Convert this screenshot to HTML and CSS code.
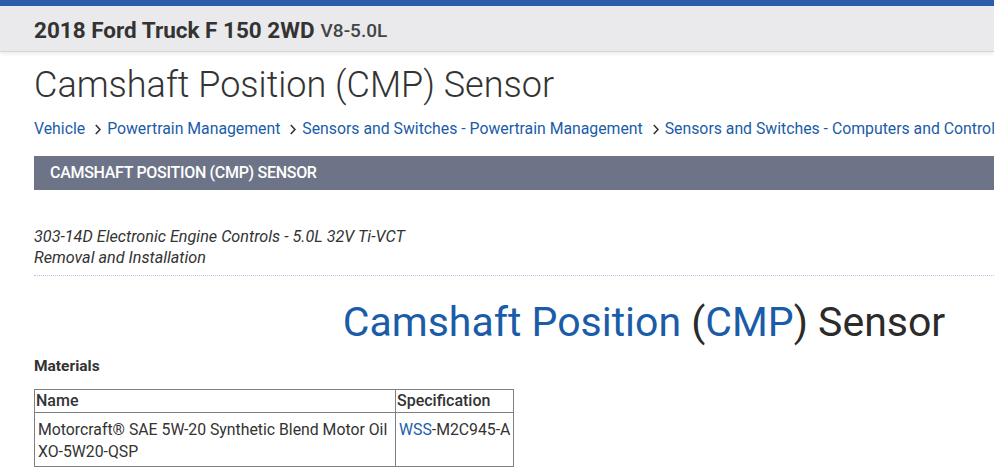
FILE: index.html
```html
<html>

<head>
    <link rel="stylesheet" href="styles.css">
</head>

<body>
    <div class="topbar"></div>
    <div class="vehicle-bar">
        <span class="vehicle">2018 Ford Truck F 150 2WD</span>
        <span class="engine">V8-5.0L</span>
    </div>
    <div class="page">
        <h1 class="doc-title">Camshaft Position (CMP) Sensor</h1>
        <div class="crumbs">
            <a href="#">Vehicle</a>
            <svg class="chev" width="6" height="11" viewBox="0 0 6 11"><polyline points="0.8,1 5,5.5 0.8,10" fill="none" stroke="#333" stroke-width="1.6"/></svg>
            <a href="#">Powertrain Management</a>
            <svg class="chev" width="6" height="11" viewBox="0 0 6 11"><polyline points="0.8,1 5,5.5 0.8,10" fill="none" stroke="#333" stroke-width="1.6"/></svg>
            <a href="#">Sensors and Switches - Powertrain Management</a>
            <svg class="chev" width="6" height="11" viewBox="0 0 6 11"><polyline points="0.8,1 5,5.5 0.8,10" fill="none" stroke="#333" stroke-width="1.6"/></svg>
            <a href="#">Sensors and Switches - Computers and Control Systems</a>
        </div>
        <div class="section-bar">CAMSHAFT POSITION (CMP) SENSOR</div>

        <p class="doc-source">303-14D Electronic Engine Controls - 5.0L 32V Ti-VCT<br>Removal and Installation</p>
        <hr class="dotted">

        <h2 class="proc-title"><span class="blue">Camshaft Position</span> (<span class="blue">CMP</span>) Sensor</h2>

        <h3 class="materials">Materials</h3>
        <table class="spec">
            <tr>
                <th class="col-name">Name</th>
                <th>Specification</th>
            </tr>
            <tr>
                <td>Motorcraft® SAE 5W-20 Synthetic Blend Motor Oil<br>XO-5W20-QSP</td>
                <td><a href="#">WSS</a>-M2C945-A</td>
            </tr>
        </table>
    </div>
</body>

</html>
```

FILE: styles.css
```css
body {
    margin: 0;
    font-family: Roboto, 'Liberation Sans', sans-serif;
    color: #333;
    background: #fff;
    overflow-x: hidden;
}
a {
    color: #1a5ca8;
    text-decoration: none;
}
.topbar {
    height: 6px;
    background-color: #2b5ea9;
}
.vehicle-bar {
    height: 45px;
    padding-left: 34px;
    display: flex;
    align-items: center;
    gap: 6px;
    background-color: #eaeaec;
    border-bottom: 1px solid #d6d6d8;
    box-shadow: 0 2px 4px rgba(0, 0, 0, 0.08);
}
.vehicle {
    font-size: 22.5px;
    font-weight: 700;
    color: #333;
    padding-top: 2px;
}
.engine {
    font-size: 19px;
    font-weight: 500;
    color: #444;
    padding-top: 4px;
}
.page {
    width: 1220px;
    padding-left: 34px;
}
.doc-title {
    margin: 12px 0 0 0;
    font-size: 36px;
    font-weight: 300;
    line-height: 43px;
    color: #333;
}
.crumbs {
    margin-top: 12px;
    height: 20px;
    display: flex;
    align-items: center;
    white-space: nowrap;
    font-size: 15.8px;
    line-height: 20px;
}
.chev {
    margin: 1px 6px 0 10px;
}
.section-bar {
    margin-top: 17px;
    height: 34px;
    line-height: 34px;
    padding-left: 16px;
    background-color: #6e7488;
    color: #fff;
    font-size: 16px;
    font-weight: 500;
    letter-spacing: -0.3px;
}
.doc-source {
    margin: 36px 0 0 0;
    font-size: 16.2px;
    font-style: italic;
    line-height: 21px;
    color: #333;
}
hr.dotted {
    margin: 7px 0 0 0;
    border: 0;
    border-top: 1px dotted #b3c7e3;
}
.proc-title {
    margin: 21px 0 0 0;
    text-align: center;
    font-size: 41px;
    font-weight: 400;
    line-height: 50px;
    color: #2b2b2b;
}
.blue {
    color: #1a5ca8;
}
.materials {
    margin: 10px 0 0 0;
    font-size: 15.5px;
    font-weight: 700;
    line-height: 18px;
}
table.spec {
    margin-top: 14px;
    border-collapse: collapse;
    font-size: 16px;
    color: #333;
}
.spec th {
    text-align: left;
    font-weight: 500;
    padding: 1px;
    line-height: 20px;
    border: 1px solid #7f7f7f;
}
.spec td {
    vertical-align: top;
    white-space: nowrap;
    font-size: 15.8px;
    padding: 6px 3px 3px 3px;
    line-height: 22px;
    border: 1px solid #7f7f7f;
}
.col-name {
    width: 358px;
}
```
